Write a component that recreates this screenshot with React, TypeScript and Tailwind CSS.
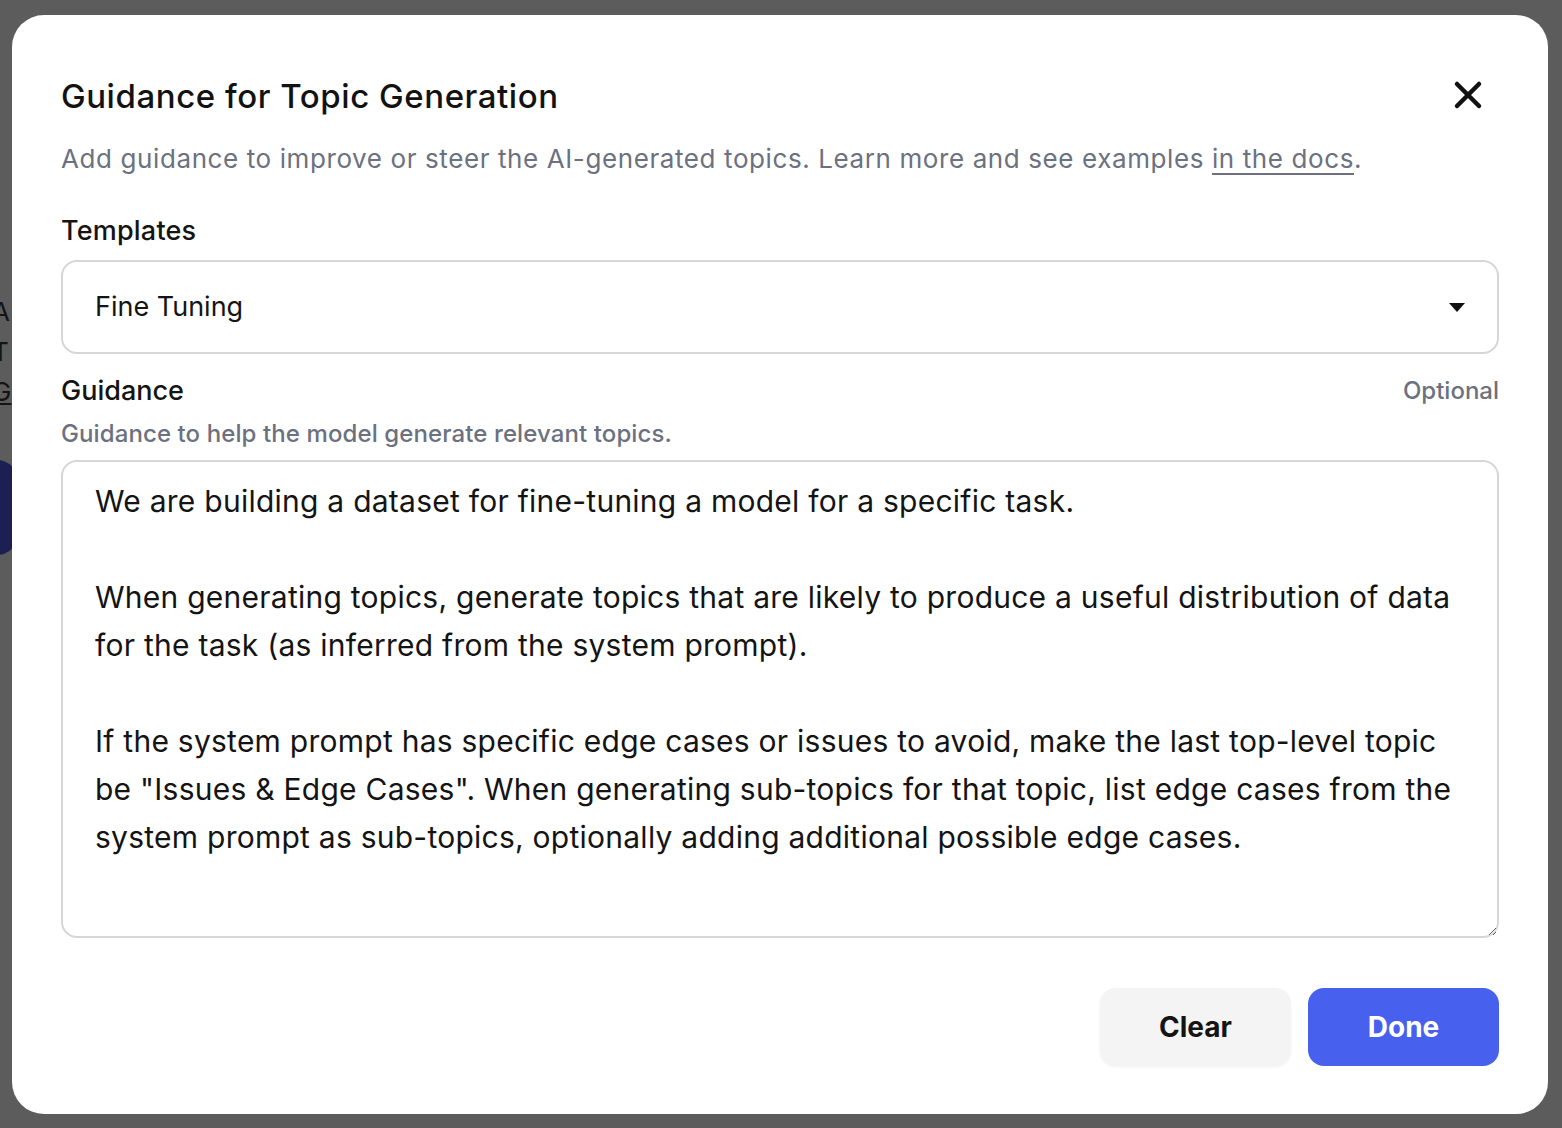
import React from "react";

const guidanceText = `We are building a dataset for fine-tuning a model for a specific task.

When generating topics, generate topics that are likely to produce a useful distribution of data for the task (as inferred from the system prompt).

If the system prompt has specific edge cases or issues to avoid, make the last top-level topic be "Issues & Edge Cases". When generating sub-topics for that topic, list edge cases from the system prompt as sub-topics, optionally adding additional possible edge cases.`;

const CloseIcon = () => (
  <svg width="40" height="40" viewBox="0 0 40 40" fill="none">
    <path d="M9 9L31 31M31 9L9 31" stroke="#111111" strokeWidth="4.5" strokeLinecap="round" />
  </svg>
);

const Caret = () => (
  <svg width="16" height="9" viewBox="0 0 16 9">
    <path d="M0 0H16L8 9Z" fill="#111111" />
  </svg>
);

export default function App() {
  return (
    <div
      className="relative w-[1562px] h-[1128px] bg-[#5c5c5c] overflow-hidden"
      style={{ fontFamily: "Inter, 'Noto Sans', sans-serif" }}
    >
      {/* page behind the overlay */}
      <div className="absolute left-0 top-[292px] flex flex-col text-[26px] leading-[40px] text-[#141414] -ml-[8px]">
        <span>A</span>
        <span>T</span>
        <span className="underline">G</span>
      </div>
      <div className="absolute -left-[40px] top-[460px] w-[60px] h-[95px] rounded-[24px] bg-[#1b1f52]" />

      {/* dialog */}
      <div className="absolute left-[12px] top-[15px] w-[1536px] h-[1099px] bg-white rounded-[32px] px-[49px] pt-[61px] flex flex-col">
        <div className="flex items-center justify-between">
          <h2 className="text-[33px] leading-[40px] font-medium text-[#121212] tracking-[0.55px]">
            Guidance for Topic Generation
          </h2>
          <button className="mr-[11px] -mt-[2px]">
            <CloseIcon />
          </button>
        </div>
        <p className="mt-[25px] text-[26px] leading-[36px] text-[#6b7180] tracking-[0.6px]">
          Add guidance to improve or steer the AI-generated topics. Learn more and see examples{" "}
          <a className="underline underline-offset-[5px]">in the docs</a>.
        </p>

        <label className="mt-[36px] text-[27px] leading-[36px] font-medium text-[#141414] tracking-[0.2px]">
          Templates
        </label>
        <div className="mt-[11px] h-[94px] border-2 border-[#d6d6d6] rounded-[16px] flex items-center justify-between pl-[32px] pr-[32px]">
          <span className="text-[27px] text-[#141414]">Fine Tuning</span>
          <Caret />
        </div>

        <div className="mt-[19px] flex items-center justify-between">
          <span className="text-[27px] leading-[36px] font-medium text-[#141414]">Guidance</span>
          <span className="text-[24px] leading-[36px] font-medium text-[#6b7180]">Optional</span>
        </div>
        <p className="mt-[9px] text-[24px] leading-[32px] font-medium text-[#6b7180] tracking-[0.1px]">
          Guidance to help the model generate relevant topics.
        </p>
        <textarea
          readOnly
          defaultValue={guidanceText}
          className="mt-[10px] h-[478px] border-2 border-[#d6d6d6] rounded-[16px] pl-[32px] pr-[30px] pt-[15px] text-[30px] leading-[48px] text-[#141414] tracking-[0.25px] outline-none resize-y"
          style={{ fontFamily: "Inter, 'Noto Sans', sans-serif" }}
        />

        <div className="mt-[50px] flex justify-end gap-[17px]">
          <button className="w-[191px] h-[78px] rounded-[16px] bg-[#f4f4f4] shadow-[0_1px_3px_rgba(0,0,0,0.06)] text-[28px] font-bold text-[#141414]">
            Clear
          </button>
          <button className="w-[191px] h-[78px] rounded-[16px] bg-[#4760ee] text-[28px] font-bold text-white">
            Done
          </button>
        </div>
      </div>
    </div>
  );
}
